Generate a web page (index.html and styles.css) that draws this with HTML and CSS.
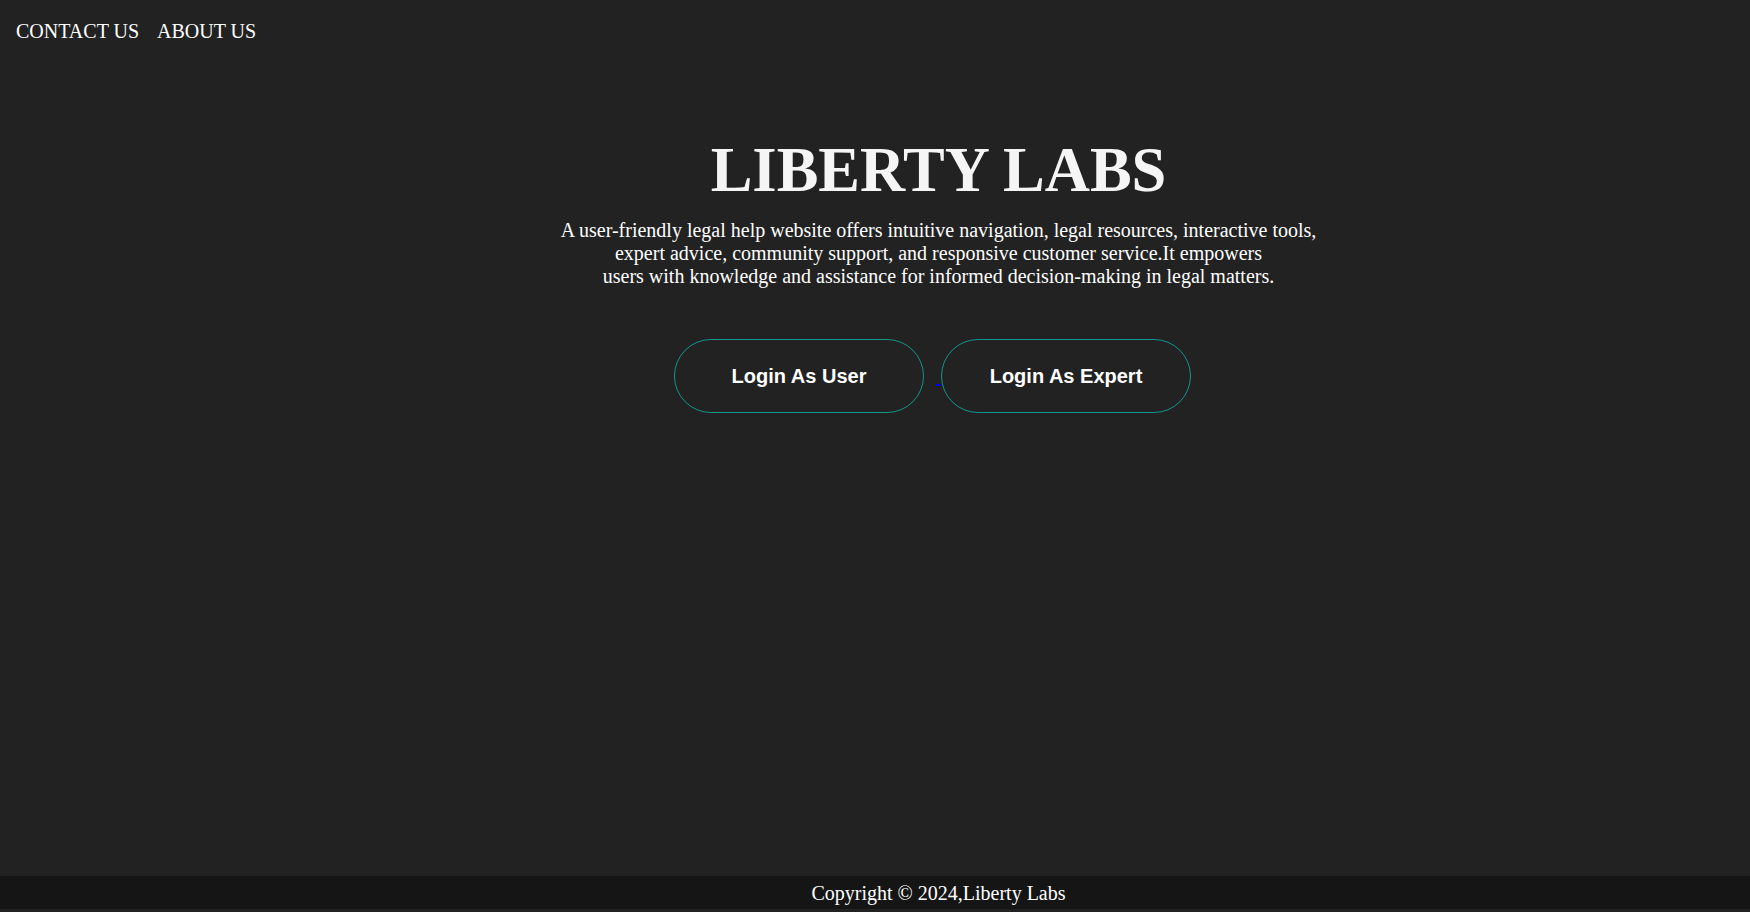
FILE: index.html
```html
<!DOCTYPE html>
<html lang="en">
<head>
<meta charset="utf-8">
<title>Liberty Labs</title>
<link rel="stylesheet" href="styles.css">
</head>
<body>
<div class="page">
  <nav class="nav">
    <a class="nav-link" href="#">CONTACT US</a>
    <a class="nav-link" href="#">ABOUT US</a>
  </nav>
  <main class="hero">
    <h1 class="title">LIBERTY LABS</h1>
    <p class="lead">A user-friendly legal help website offers intuitive navigation, legal resources, interactive tools,<br>expert advice, community support, and responsive customer service.It empowers<br>users with knowledge and assistance for informed decision-making in legal matters.</p>
    <div class="actions"><a href="#"><button class="btn">Login As User</button> </a><a href="#"><button class="btn">Login As Expert</button></a></div>
  </main>
  <footer class="footer">
    <div class="footer-text">Copyright &copy; 2024,Liberty Labs</div>
  </footer>
</div>
</body>
</html>
```

FILE: styles.css
```css
html, body {
  margin: 0;
  padding: 0;
  background: #222222;
}

body {
  font-family: "Liberation Serif", "Times New Roman", serif;
  font-size: 20px;
  line-height: 23px;
  color: #ffffff;
}

.page {
  min-height: 912px;
  display: flex;
  flex-direction: column;
  box-sizing: border-box;
  padding-bottom: 3px;
}

.nav {
  display: flex;
  gap: 18px;
  padding: 20px 16px 0;
}

.nav-link {
  color: #ffffff;
  text-decoration: none;
}

.hero {
  padding-left: 127px;
  text-align: center;
}

.title {
  margin: 91px 0 0;
  font-size: 62.5px;
  line-height: normal;
  font-weight: bold;
  color: #f5f5f5;
}

.lead {
  margin: 12px 0 0;
  color: #ffffff;
}

.actions {
  margin-top: 51px;
}

.btn {
  box-sizing: border-box;
  width: 250px;
  height: 74px;
  margin: 0 12px 0 0;
  padding: 0;
  border: 1px solid #10968a;
  border-radius: 37px;
  background: transparent;
  color: #ffffff;
  font-family: "Liberation Sans", Arial, sans-serif;
  font-size: 20px;
  font-weight: bold;
  cursor: pointer;
}

.footer {
  margin-top: auto;
  background: #151515;
  padding: 6px 0 4px;
}

.footer-text {
  padding-left: 127px;
  text-align: center;
}
```
